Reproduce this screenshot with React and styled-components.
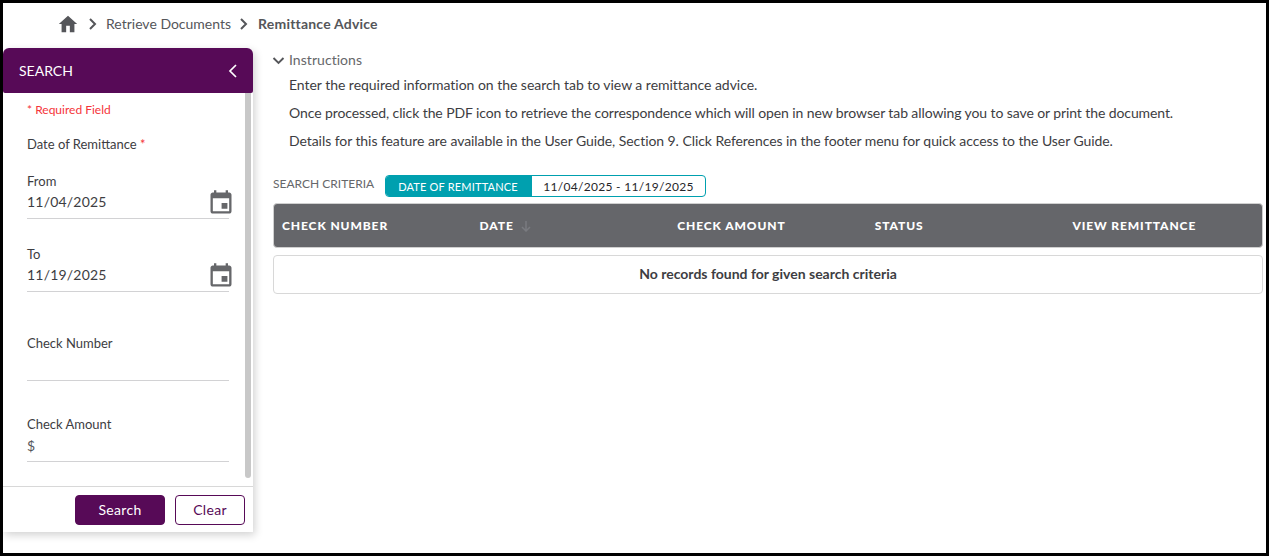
import styled, { createGlobalStyle } from "styled-components"

const GlobalStyle = createGlobalStyle`
    html, body {
        margin: 0;
        padding: 0;
        background: #fff;
    }
    * {
        box-sizing: border-box;
    }
`

const Page = styled.div`
    width: 1269px;
    height: 556px;
    border: 3px solid #000;
    background: #fff;
    font-family: Lato, "Open Sans", sans-serif;
    font-size: 14px;
    color: #3d3d42;
    display: flex;
    flex-direction: column;
    overflow: hidden;
`

const Breadcrumb = styled.nav`
    height: 45px;
    flex: none;
    display: flex;
    align-items: center;
    padding: 0 0 4px 54px;
    font-size: 14px;
    color: #55565a;
`

const Crumb = styled.span`
    font-weight: ${p => (p.$current ? 700 : 400)};
    letter-spacing: ${p => (p.$current ? "0.2px" : "0")};
`

const Chevron = styled.svg`
    width: 10px;
    height: 14px;
    margin: 0 ${p => p.$right}px 0 ${p => p.$left}px;
    fill: none;
    stroke: #55565a;
    stroke-width: 2;
`

const HomeIcon = styled.svg`
    width: 22px;
    height: 22px;
    fill: #55565a;
`

const Body = styled.div`
    flex: 1;
    display: flex;
    min-height: 0;
`

const Sidebar = styled.aside`
    width: 250px;
    height: 484px;
    flex: none;
    display: flex;
    flex-direction: column;
    background: #fff;
    box-shadow: 2px 3px 8px rgba(0, 0, 0, 0.18);
    border-radius: 6px 6px 0 0;
`

const SideHeader = styled.div`
    height: 45px;
    flex: none;
    background: #570a57;
    color: #fff;
    border-radius: 6px 6px 2px 2px;
    display: flex;
    align-items: center;
    justify-content: space-between;
    padding: 0 14px 0 16px;
    font-size: 14px;
`

const SideIcon = styled.svg`
    width: 12px;
    height: 16px;
    fill: none;
    stroke: #fff;
    stroke-width: 1.7;
`

const SideBody = styled.div`
    position: relative;
    flex: 1;
    padding: 0 24px;
`

const ScrollThumb = styled.div`
    position: absolute;
    top: 0;
    right: 2px;
    width: 6px;
    height: 385px;
    background: #c8c8c8;
    border-radius: 0 0 3px 3px;
`

const Required = styled.div`
    height: 17px;
    margin-top: 8px;
    line-height: 17px;
    font-size: 12px;
    color: #f5343a;
`

const GroupLabel = styled.div`
    height: 18px;
    margin-top: 17px;
    line-height: 18px;
    font-size: 13px;
    color: #3d3d42;
`

const Star = styled.span`
    color: #f5343a;
`

const Field = styled.div`
    margin-top: ${p => p.$top}px;
    width: 202px;
    height: ${p => p.$height}px;
    border-bottom: 1px solid #d2d2d4;
    position: relative;
`

const FieldLabel = styled.div`
    height: 18px;
    line-height: 18px;
    font-size: 13px;
`

const FieldValue = styled.div`
    margin-top: ${p => (p.$muted ? 3 : 2)}px;
    height: 20px;
    line-height: 20px;
    font-size: 14px;
    letter-spacing: 0.2px;
    color: ${p => (p.$muted ? "#55565a" : "#3d3d42")};
`

const CalendarIcon = styled.svg`
    position: absolute;
    right: -5.5px;
    top: 17px;
    width: 28px;
    height: 28px;
    fill: #66676a;
`

const SideFooter = styled.div`
    height: 46px;
    flex: none;
    border-top: 1px solid #d8d8d8;
    display: flex;
    justify-content: flex-end;
    align-items: flex-start;
    gap: 10px;
    padding: 8px 8px 0 0;
`

const Button = styled.button`
    height: 30px;
    width: ${p => p.$width}px;
    border-radius: 4px;
    border: 1px solid #570a57;
    background: ${p => (p.$primary ? "#570a57" : "#fff")};
    color: ${p => (p.$primary ? "#fff" : "#570a57")};
    font-family: Lato, sans-serif;
    font-size: 14px;
    letter-spacing: 0.3px;
    padding: 0 0 2px;
`

const Main = styled.main`
    flex: 1;
    padding: 0 3px 0 19px;
    min-width: 0;
`

const InstructionsHead = styled.div`
    height: 18px;
    margin-top: 3px;
    display: flex;
    align-items: center;
    gap: 4px;
    color: #66676a;
    line-height: 18px;
    letter-spacing: 0.05px;
`

const DownIcon = styled.svg`
    width: 13px;
    height: 13px;
    fill: none;
    stroke: #55565a;
    stroke-width: 1.9;
`

const InstructionLine = styled.p`
    margin: ${p => p.$top}px 0 0 17px;
    height: 18px;
    line-height: 18px;
    letter-spacing: ${p => p.$track}px;
    color: #3d3d42;
`

const CriteriaRow = styled.div`
    margin: 25px 0 0 1px;
    display: flex;
    align-items: center;
    height: 22px;
`

const CriteriaLabel = styled.div`
    width: 112px;
    margin-top: -6px;
    font-size: 12px;
    color: #66676a;
`

const Pill = styled.div`
    display: flex;
    width: 321px;
    height: 22px;
    border: 1px solid #00a0af;
    border-radius: 4px;
    overflow: hidden;
`

const PillName = styled.div`
    width: 146px;
    padding-right: 2px;
    background: #00a0af;
    color: #fff;
    font-size: 11px;
    letter-spacing: 0.18px;
    display: flex;
    align-items: center;
    justify-content: center;
`

const PillValue = styled.div`
    flex: 1;
    font-size: 12px;
    letter-spacing: 0.3px;
    color: #26262a;
    display: flex;
    align-items: center;
    justify-content: center;
`

const TableHead = styled.div`
    margin: 6px 0 0 1px;
    height: 45px;
    background: #65666a;
    border: 1px solid #d0d0d0;
    border-radius: 4px;
    display: grid;
    grid-template-columns: repeat(5, 197.6px);
    align-items: center;
    padding-left: 8px;
    color: #fff;
    font-size: 12px;
    font-weight: 900;
    letter-spacing: 0.9px;
`

const HeadCell = styled.div`
    display: flex;
    align-items: center;
    gap: 6px;
`

const SortIcon = styled.svg`
    width: 12px;
    height: 12px;
    fill: none;
    stroke: #7a7b80;
    stroke-width: 1.5;
`

const EmptyRow = styled.div`
    margin: 7px 0 0 1px;
    height: 39px;
    padding-bottom: 2px;
    border: 1px solid #d8d8d8;
    border-radius: 4px;
    display: flex;
    align-items: center;
    justify-content: center;
    font-weight: 700;
    font-size: 14px;
    color: #3d3d42;
`

function Calendar() {
    return (
        <CalendarIcon viewBox="0 0 24 24">
            <path d="M19 3h-1V1h-2v2H8V1H6v2H5c-1.1 0-2 .9-2 2v14c0 1.1.9 2 2 2h14c1.1 0 2-.9 2-2V5c0-1.1-.9-2-2-2zm0 16H5V8h14v11zM12.5 12h5v5h-5z" />
        </CalendarIcon>
    )
}

const columns = ["CHECK NUMBER", "DATE", "CHECK AMOUNT", "STATUS", "VIEW REMITTANCE"]

function App() {
    return (
        <Page>
            <GlobalStyle />
            <Breadcrumb>
                <HomeIcon viewBox="0 0 24 24">
                    <path d="M10 21v-7h4v7h5v-9h3L12 3 2 12h3v9z" />
                </HomeIcon>
                <Chevron viewBox="0 0 10 14" $left={9} $right={8}>
                    <path d="M2 2l5 5-5 5" />
                </Chevron>
                <Crumb>Retrieve Documents</Crumb>
                <Chevron viewBox="0 0 10 14" $left={8} $right={9}>
                    <path d="M2 2l5 5-5 5" />
                </Chevron>
                <Crumb $current>Remittance Advice</Crumb>
            </Breadcrumb>
            <Body>
                <Sidebar>
                    <SideHeader>
                        <span>SEARCH</span>
                        <SideIcon viewBox="0 0 12 16">
                            <path d="M9 2L3 8l6 6" />
                        </SideIcon>
                    </SideHeader>
                    <SideBody>
                        <ScrollThumb />
                        <Required>* Required Field</Required>
                        <GroupLabel>Date of Remittance <Star>*</Star></GroupLabel>
                        <Field $top={19} $height={47}>
                            <FieldLabel>From</FieldLabel>
                            <FieldValue>11/04/2025</FieldValue>
                            <Calendar />
                        </Field>
                        <Field $top={26} $height={47}>
                            <FieldLabel>To</FieldLabel>
                            <FieldValue>11/19/2025</FieldValue>
                            <Calendar />
                        </Field>
                        <Field $top={42} $height={47}>
                            <FieldLabel>Check Number</FieldLabel>
                        </Field>
                        <Field $top={34} $height={47}>
                            <FieldLabel>Check Amount</FieldLabel>
                            <FieldValue $muted>$</FieldValue>
                        </Field>
                    </SideBody>
                    <SideFooter>
                        <Button $primary $width={90}>Search</Button>
                        <Button $width={70}>Clear</Button>
                    </SideFooter>
                </Sidebar>
                <Main>
                    <InstructionsHead>
                        <DownIcon viewBox="0 0 13 13">
                            <path d="M1.5 4l5 5 5-5" />
                        </DownIcon>
                        Instructions
                    </InstructionsHead>
                    <InstructionLine $top={7} $track={-0.03}>Enter the required information on the search tab to view a remittance advice.</InstructionLine>
                    <InstructionLine $top={10} $track={-0.095}>Once processed, click the PDF icon to retrieve the correspondence which will open in new browser tab allowing you to save or print the document.</InstructionLine>
                    <InstructionLine $top={10} $track={-0.065}>Details for this feature are available in the User Guide, Section 9. Click References in the footer menu for quick access to the User Guide.</InstructionLine>
                    <CriteriaRow>
                        <CriteriaLabel>SEARCH CRITERIA</CriteriaLabel>
                        <Pill>
                            <PillName>DATE OF REMITTANCE</PillName>
                            <PillValue>11/04/2025 - 11/19/2025</PillValue>
                        </Pill>
                    </CriteriaRow>
                    <TableHead>
                        {columns.map(c => (
                            <HeadCell key={c}>
                                {c}
                                {c === "DATE" && (
                                    <SortIcon viewBox="0 0 12 12">
                                        <path d="M6 1v10M2 7l4 4 4-4" />
                                    </SortIcon>
                                )}
                            </HeadCell>
                        ))}
                    </TableHead>
                    <EmptyRow>No records found for given search criteria</EmptyRow>
                </Main>
            </Body>
        </Page>
    )
}

export default App
